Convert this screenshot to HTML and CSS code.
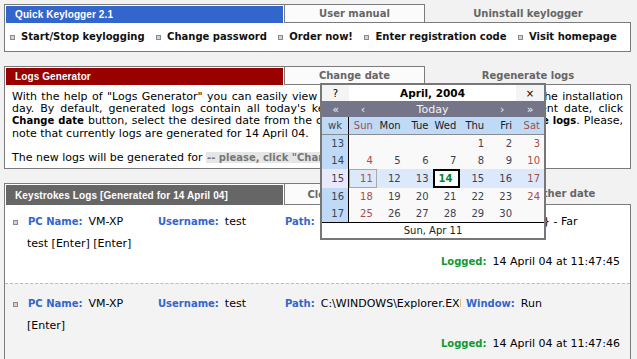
FILE: index.html
```html
<!DOCTYPE html>
<html lang="en">

<head>
    <meta charset="UTF-8">
    <title>Quick Keylogger 2.1</title>
    <link rel="stylesheet" href="styles.css">
</head>

<body>
    <div class="panel">
        <div class="tabs">
            <div class="tab-active"><span class="blue">Quick Keylogger 2.1</span></div>
            <div class="tab">User manual</div>
            <div class="tab tab-free">Uninstall keylogger</div>
        </div>
        <div class="box links">
            <a class="link" href="#"><i class="dot"></i>Start/Stop keylogging</a>
            <a class="link" href="#"><i class="dot"></i>Change password</a>
            <a class="link" href="#"><i class="dot"></i>Order now!</a>
            <a class="link" href="#"><i class="dot"></i>Enter registration code</a>
            <a class="link" href="#"><i class="dot"></i>Visit homepage</a>
        </div>
    </div>

    <div class="panel">
        <div class="tabs">
            <div class="tab-active"><span class="red">Logs Generator</span></div>
            <div class="tab">Change date</div>
            <div class="tab tab-free">Regenerate logs</div>
        </div>
        <div class="box generator">
            <p>With the help of "Logs Generator" you can easily view recorded keystrokes for any day since the installation day. By default, generated logs contain all today's keystrokes. To view the logs of a different date, click <b>Change date</b> button, select the desired date from the calendar on the left and click <b>Regenerate logs</b>. Please, note that currently logs are generated for 14 April 04.</p>
            <p class="new-date">The new logs will be generated for <span class="pending">-- please, click "Change date" --</span></p>
        </div>
    </div>

    <div class="panel">
        <div class="tabs tabs-tall">
            <div class="tab-active"><span class="dark">Keystrokes Logs [Generated for 14 April 04]</span></div>
            <div class="tab">Clear keystrokes</div>
            <div class="tab tab-free">Generate for other date</div>
        </div>
        <div class="box logs">
            <div class="entry">
                <div class="entry-head">
                    <i class="dot"></i>
                    <span class="field f-pc"><b>PC Name:</b>VM-XP</span>
                    <span class="field f-user"><b>Username:</b>test</span>
                    <span class="field f-path"><b>Path:</b><span class="path">C:\Program Files\Far\Far.exe</span></span>
                    <span class="field"><b>Window:</b>{C:\} - Far</span>
                </div>
                <div class="entry-keys">test [Enter] [Enter]</div>
                <div class="entry-time"><b>Logged:</b>14 April 04 at 11:47:45</div>
            </div>
            <div class="entry">
                <div class="entry-head">
                    <i class="dot"></i>
                    <span class="field f-pc"><b>PC Name:</b>VM-XP</span>
                    <span class="field f-user"><b>Username:</b>test</span>
                    <span class="field f-path"><b>Path:</b><span class="path">C:\WINDOWS\Explorer.EXE</span></span>
                    <span class="field"><b>Window:</b>Run</span>
                </div>
                <div class="entry-keys">[Enter]</div>
                <div class="entry-time"><b>Logged:</b>14 April 04 at 11:47:46</div>
            </div>
        </div>
    </div>

    <div class="calendar">
        <table class="cal">
            <colgroup>
                <col class="col-wk">
                <col span="7">
            </colgroup>
            <thead>
                <tr class="cal-title">
                    <td class="cal-btn">?</td>
                    <td colspan="6" class="cal-month">April, 2004</td>
                    <td class="cal-btn">&times;</td>
                </tr>
                <tr class="cal-nav">
                    <td>&laquo;</td>
                    <td>&lsaquo;</td>
                    <td colspan="4">Today</td>
                    <td>&rsaquo;</td>
                    <td>&raquo;</td>
                </tr>
                <tr class="cal-days">
                    <td class="wk">wk</td>
                    <td class="we">Sun</td>
                    <td>Mon</td>
                    <td>Tue</td>
                    <td>Wed</td>
                    <td>Thu</td>
                    <td>Fri</td>
                    <td class="we">Sat</td>
                </tr>
            </thead>
            <tbody>
                <tr>
                    <td class="wk">13</td>
                    <td></td><td></td><td></td><td></td>
                    <td>1</td><td>2</td><td class="we">3</td>
                </tr>
                <tr>
                    <td class="wk">14</td>
                    <td class="we">4</td><td>5</td><td>6</td><td>7</td><td>8</td><td>9</td><td class="we">10</td>
                </tr>
                <tr class="hover">
                    <td class="wk">15</td>
                    <td class="we selected">11</td><td>12</td><td>13</td><td class="today">14</td><td>15</td><td>16</td><td class="we">17</td>
                </tr>
                <tr>
                    <td class="wk">16</td>
                    <td class="we">18</td><td>19</td><td>20</td><td>21</td><td>22</td><td>23</td><td class="we">24</td>
                </tr>
                <tr>
                    <td class="wk">17</td>
                    <td class="we">25</td><td>26</td><td>27</td><td>28</td><td>29</td><td>30</td><td></td>
                </tr>
            </tbody>
            <tfoot>
                <tr>
                    <td colspan="8">Sun, Apr 11</td>
                </tr>
            </tfoot>
        </table>
    </div>
</body>

</html>
```

FILE: styles.css
```css
body {
    margin: 0;
    background-color: #f2f2f2;
    font-family: "DejaVu Sans", Verdana, sans-serif;
    font-size: 11px;
    color: #000;
}

.panel {
    width: 627px;
    margin: 4px 0 14px 4px;
}

.tabs {
    display: flex;
    height: 19px;
}

.tabs-tall {
    height: 22px;
}

.tab-active {
    width: 281px;
    box-sizing: border-box;
    border: 1px solid #7b7b7b;
    border-bottom: 0;
    padding: 1px 1px 0;
    background-color: #fff;
}

.tab-active span {
    display: flex;
    align-items: center;
    height: 100%;
    padding-left: 9px;
    font-family: "Liberation Sans", Arial, sans-serif;
    font-size: 10px;
    font-weight: bold;
    letter-spacing: 0.1px;
    color: #fff;
}

.blue {
    background-color: #3366cc;
}

.red {
    background-color: #990000;
}

.dark {
    background-color: #666666;
}

.tab {
    width: 140px;
    box-sizing: border-box;
    display: flex;
    align-items: center;
    justify-content: center;
    border: 1px solid #7b7b7b;
    border-left: 0;
    background-color: #fbfbfb;
    font-size: 10px;
    font-weight: bold;
    color: #666;
    white-space: nowrap;
}

.tab-free {
    flex: 1;
    border: 0;
    border-bottom: 1px solid #7b7b7b;
    background-color: transparent;
}

.box {
    border: 1px solid #7b7b7b;
    border-top: 0;
    background-color: #fff;
}

.links {
    display: flex;
    gap: 11.5px;
    padding: 7px 5px;
    line-height: 14px;
}

.link {
    display: flex;
    flex-shrink: 0;
    align-items: center;
    white-space: nowrap;
    font-size: 10px;
    font-weight: bold;
    color: #111;
    text-decoration: none;
}

.dot {
    display: inline-block;
    flex-shrink: 0;
    width: 3px;
    height: 3px;
    border: 1px solid #8a8a8a;
    background-color: #d2d2d2;
    margin-right: 6px;
}

.generator {
    padding: 6px 7px 4px;
    line-height: 12.2px;
    text-align: justify;
}

.generator p {
    margin: 0;
}

.generator b {
    font-size: 10px;
}

.generator .new-date {
    margin-top: 12.2px;
}

.pending {
    background-color: #e6e6e6;
    color: #777;
    font-size: 10px;
    font-weight: bold;
    padding: 0 1px;
}

.logs {
    padding-bottom: 30px;
}

.entry {
    padding: 13px 10px 14px 8px;
    line-height: 14px;
}

.entry:first-child {
    padding-top: 10px;
}

.entry + .entry {
    border-top: 1px dashed #bcbcbc;
    background-color: #f3f3f3;
}

.entry-head {
    display: flex;
    align-items: center;
    white-space: nowrap;
}

.entry-head .dot {
    margin-right: 10px;
}

.field b,
.entry-time b {
    font-size: 10px;
    margin-right: 6px;
}

.field b {
    color: #3366cc;
}

.f-pc {
    width: 130px;
}

.f-user {
    width: 127px;
}

.f-path {
    width: 181px;
    display: flex;
}

.path {
    width: 140px;
    overflow: hidden;
}

.entry-keys {
    margin-top: 8px;
    padding-left: 14px;
}

.entry-time {
    margin-top: 4px;
    text-align: right;
}

.entry-time b {
    color: #119933;
}

/* date picker popup */
.calendar {
    position: absolute;
    left: 320px;
    top: 83px;
    border: 2px solid #777;
    background-color: #f9f9f9;
}

.cal {
    width: 222px;
    table-layout: fixed;
    border-collapse: separate;
    border-spacing: 0;
    font-size: 10px;
    color: #3b4354;
}

.col-wk {
    width: 27px;
}

.cal td {
    padding: 0 4px 0 0;
    height: 17px;
    text-align: right;
    white-space: nowrap;
}

.cal-title td {
    height: 16px;
    padding: 0;
    text-align: center;
    background-color: #fff;
    color: #000;
}

.cal-title .cal-btn {
    background-color: #f4f4f4;
}

.cal-month {
    font-weight: bold;
    font-size: 10.5px;
}

.cal-nav td {
    height: 16px;
    padding: 0;
    text-align: center;
    background-color: #75758a;
    color: #f2f2f2;
    font-size: 11px;
}

.cal-days td {
    background-color: #bfdaf7;
    color: #1a1a1a;
    border-bottom: 1px solid #8c8c8c;
}

.cal .wk {
    background-color: #bfdaf7;
    border-right: 1px solid #000;
    color: #3b4354;
}

.cal-days .wk {
    text-align: center;
    padding: 0;
}

.cal .we {
    color: #a84c4c;
}

.hover td {
    background-color: #dce9fa;
}

.hover .wk {
    background-color: #e9e9fb;
}

.cal .selected {
    border: 1px solid #a9a9a9;
    padding-right: 3px;
}

.cal .today {
    border: 1px solid #000;
    padding-right: 7px;
    background-color: #fff;
    color: #00882e;
    font-weight: bold;
    box-shadow: inset 0 0 0 1px #000;
}

.cal tfoot td {
    height: 15px;
    padding: 0;
    text-align: center;
    border-top: 1px solid #000;
    background-color: #fff;
    color: #222;
}
```
